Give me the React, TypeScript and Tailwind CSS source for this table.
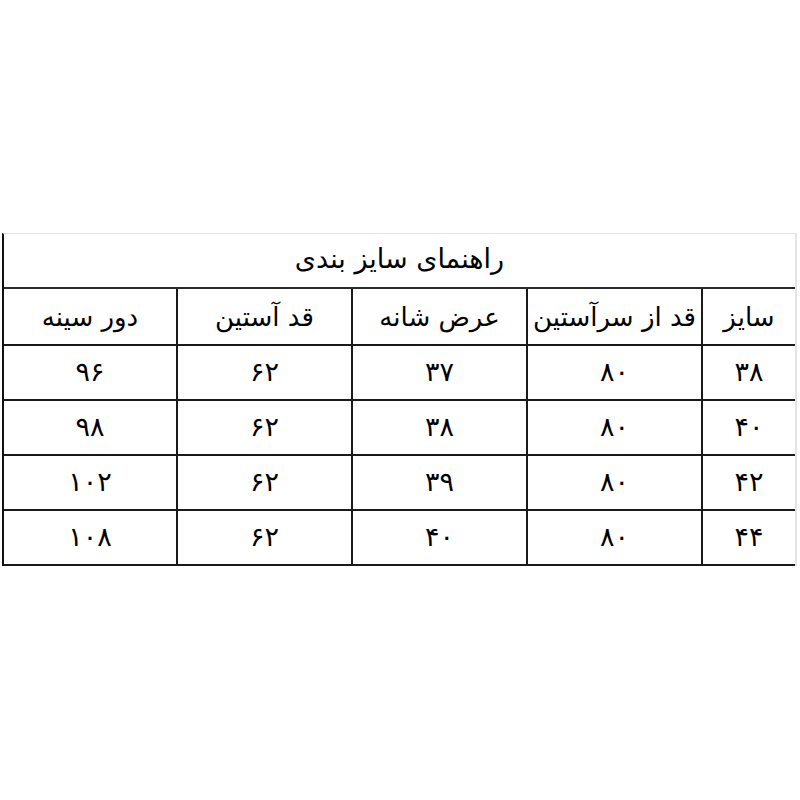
import React from "react";

const headers = ["سایز", "قد از سرآستین", "عرض شانه", "قد آستین", "دور سینه"];
const rows = [
  ["۳۸", "۸۰", "۳۷", "۶۲", "۹۶"],
  ["۴۰", "۸۰", "۳۸", "۶۲", "۹۸"],
  ["۴۲", "۸۰", "۳۹", "۶۲", "۱۰۲"],
  ["۴۴", "۸۰", "۴۰", "۶۲", "۱۰۸"],
];

function Cell({ children, idx, h }: { children: React.ReactNode; idx: number; h: string }) {
  const left = idx < 4 ? "border-l-2 border-l-[#1a1a1a]" : "";
  return (
    <div className={`flex items-center justify-center ${left} ${h}`}>{children}</div>
  );
}

export default function App() {
  return (
    <div className="w-[800px] h-[800px] bg-white pt-[233px] pl-[2px]" style={{ fontFamily: '"DejaVu Sans", "Noto Sans", sans-serif' }}>
      <div dir="rtl" className="w-[795px] border-t border-t-[#e4e4e4] border-r-2 border-r-[#e4e4e4] border-l-2 border-l-[#111] text-black">
        <div className="h-[55px] border-b-2 border-b-[#2a2a2a] flex items-center justify-center text-[27px] pb-[2px]">
          راهنمای سایز بندی
        </div>
        <div className="grid grid-cols-[94px_175px_175px_175px_172px] border-b-2 border-b-[#1a1a1a] text-[26px]">
          {headers.map((t, i) => (
            <Cell key={i} idx={i} h="h-[55px] pt-[2px]">{t}</Cell>
          ))}
        </div>
        {rows.map((r, ri) => (
          <div key={ri} className="grid grid-cols-[94px_175px_175px_175px_172px] border-b-2 border-b-[#1a1a1a] text-[27px]">
            {r.map((t, i) => (
              <Cell key={i} idx={i} h="h-[53px]">{t}</Cell>
            ))}
          </div>
        ))}
      </div>
    </div>
  );
}
